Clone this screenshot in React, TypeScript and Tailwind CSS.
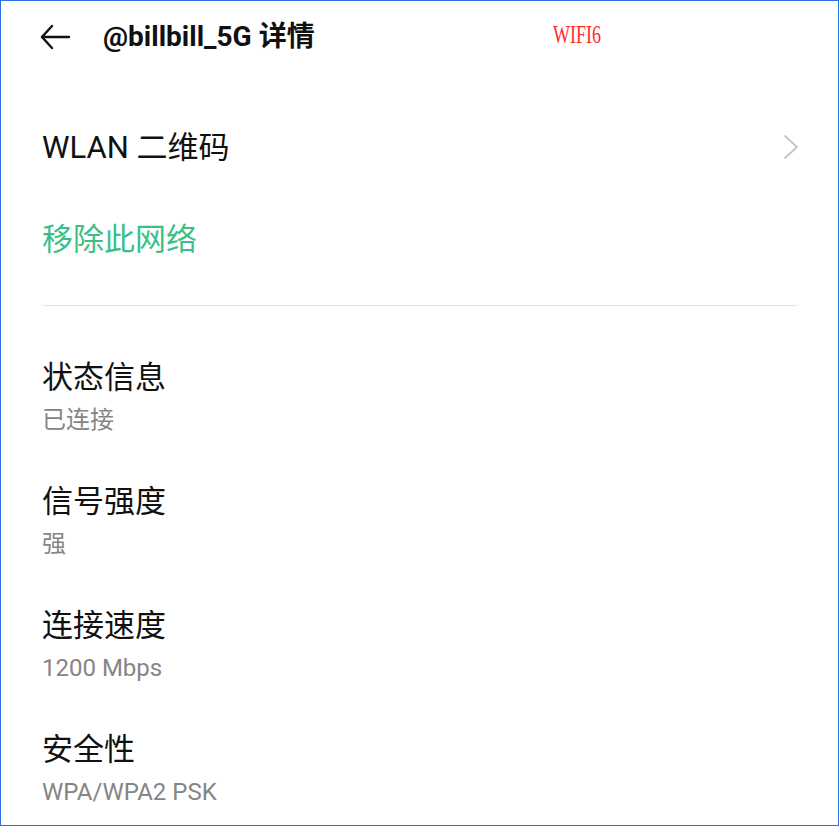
import React from "react";

const font = { fontFamily: '"Roboto", "Noto Sans CJK SC", sans-serif' };

interface InfoItem {
  title: string;
  value: string;
}

const items: InfoItem[] = [
  { title: "状态信息", value: "已连接" },
  { title: "信号强度", value: "强" },
  { title: "连接速度", value: "1200 Mbps" },
  { title: "安全性", value: "WPA/WPA2 PSK" },
];

function BackArrow() {
  return (
    <svg width="32" height="28" viewBox="0 0 32 28" fill="none" stroke="#111" strokeWidth="2.4" strokeLinecap="round" strokeLinejoin="round">
      <path d="M30 14H3" />
      <path d="M13 3L3 14l10 11" />
    </svg>
  );
}

function Chevron() {
  return (
    <svg width="16" height="26" viewBox="0 0 16 26" fill="none" stroke="#c4c4c4" strokeWidth="1.8" strokeLinecap="round" strokeLinejoin="round">
      <path d="M2 2l12 11L2 24" />
    </svg>
  );
}

export default function App() {
  return (
    <div className="w-[840px] h-[827px] bg-white">
      <div
        className="w-[839px] h-[826px] border border-[#2a6fe6] bg-white flex flex-col pl-[41px] pr-[40px]"
        style={font}
      >
        <div className="h-[72px] flex items-center">
          <div className="w-[64px] -ml-[3px] flex items-center">
            <BackArrow />
          </div>
          <span className="text-[28px] font-bold text-[#111] leading-none">@billbill_5G 详情</span>
          <span
            className="ml-[238px] text-[25px] text-[#ff2a2a] leading-none origin-left scale-x-[0.72] -mt-[6px]"
            style={{ fontFamily: '"Liberation Serif", serif' }}
          >
            WIFI6
          </span>
        </div>

        <div className="mt-[28px] h-[92px] flex items-center justify-between">
          <span className="text-[31px] text-[#111] leading-none">WLAN 二维码</span>
          <div className="-mr-[1px]">
            <Chevron />
          </div>
        </div>

        <div className="h-[92px] flex items-center">
          <span className="text-[31px] text-[#3cbf86] leading-none">移除此网络</span>
        </div>

        <div className="mt-[20px] mr-[1px] ml-[1px] h-px bg-[#e3e3e3]" />

        <div className="mt-[51px] flex flex-col gap-[46px]">
          {items.map((it) => (
            <div key={it.title} className="flex flex-col gap-[8px]">
              <div className="h-[40px] flex items-center text-[31px] text-[#111] leading-none">{it.title}</div>
              <div className="h-[30px] flex items-center text-[24px] text-[#858585] leading-none">{it.value}</div>
            </div>
          ))}
        </div>
      </div>
    </div>
  );
}
